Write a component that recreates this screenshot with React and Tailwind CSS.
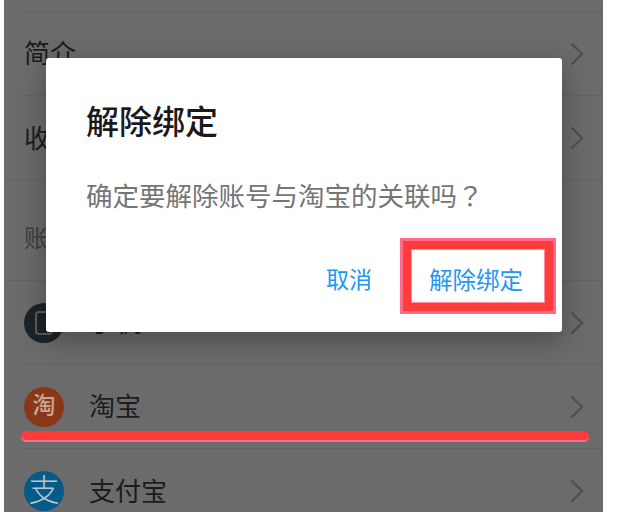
const FONT = "font-['Roboto','Noto_Sans_CJK_SC',sans-serif]";

const Chevron = () => (
  <svg width="14" height="24" viewBox="0 0 14 24" fill="none" className="shrink-0">
    <path d="M1.5 1.5 L12 12 L1.5 22.5" stroke="#505050" strokeWidth="2.4" />
  </svg>
);

const Row = ({ icon, label, last }) => (
  <div className={`ml-5 h-[84px] flex items-center pr-[19px] ${last ? '' : 'border-b border-[#636363]'}`}>
    {icon}
    <span className={`pt-0.5 text-[26px] text-[#1c1c1c] flex-1 ${icon ? 'ml-[25px]' : ''}`}>{label}</span>
    <Chevron />
  </div>
);

const Circle = ({ color, children }) => (
  <div className={`w-10 h-10 rounded-full flex items-center justify-center shrink-0 overflow-hidden ${color}`}>
    {children}
  </div>
);

export default function App() {
  return (
    <div className={`relative w-[621px] h-[512px] overflow-hidden bg-white ${FONT}`}>
      {/* 背景页面 */}
      <div className="ml-1 w-[599px] h-full bg-[#6b6b6b] overflow-hidden">
        <div className="ml-5 h-3 border-b border-[#636363]" />
        <Row label="简介" />
        <div className="ml-5 h-[84px] flex items-center pr-[19px]">
          <span className="pt-0.5 text-[26px] text-[#1c1c1c] flex-1">收货地址</span>
          <Chevron />
        </div>
        <div className="h-[101px] border-y border-[#636363] flex items-end pb-[23px] pl-5">
          <span className="text-[24px] text-[#3f3f3f]">账号绑定</span>
        </div>
        <Row
          label="手机"
          icon={
            <Circle color="bg-[#1b2329]">
              <div className="w-[18px] h-[24px] border-2 border-[#5c5c5c] rounded-sm" />
            </Circle>
          }
        />
        <Row
          label="淘宝"
          icon={
            <Circle color="bg-[#8a3716]">
              <span className="text-[23px] font-medium text-[#c9a595]">淘</span>
            </Circle>
          }
        />
        <Row
          label="支付宝"
          last
          icon={
            <Circle color="bg-[#075a85]">
              <span className="text-[31px] font-light text-[#b5c8d3]">支</span>
            </Circle>
          }
        />
      </div>

      {/* 红色下划线标注 */}
      <div className="absolute left-[21px] top-[431px] w-[568px] h-[11px] rounded-full bg-[#ff3b3b] border-b-2 border-[#ff6b8a]" />

      {/* 弹窗 */}
      <div className="absolute left-[46px] top-[58px] w-[516px] h-[274px] bg-white rounded-[3px] shadow-[0_8px_28px_rgba(0,0,0,0.3)] flex flex-col pl-10">
        <h2 className="mt-[45px] text-[33px] leading-10 font-medium text-[#1a1a1a]">解除绑定</h2>
        <p className="mt-[34px] text-[26.5px] leading-9 text-[#757575]">
          确定要解除账号与淘宝的关联吗<span className="font-['Noto_Sans_CJK_TC',sans-serif]">？</span>
        </p>
        <div className="mt-[23px] flex justify-end items-center pr-[6px]">
          <button className="pt-[11px] text-[23px] text-[#2196f3] mr-[28px]">取消</button>
          <button className="w-[156px] h-[76px] flex items-center justify-center border-[3px] border-[#ff6b8a] bg-[#ff3b3b]">
            <span className="w-[134px] h-[54px] pt-[11px] bg-white border border-[#ff8fa5] flex items-center justify-center pr-1 text-[23.5px] text-[#2196f3]">
              解除绑定
            </span>
          </button>
        </div>
      </div>
    </div>
  );
}
